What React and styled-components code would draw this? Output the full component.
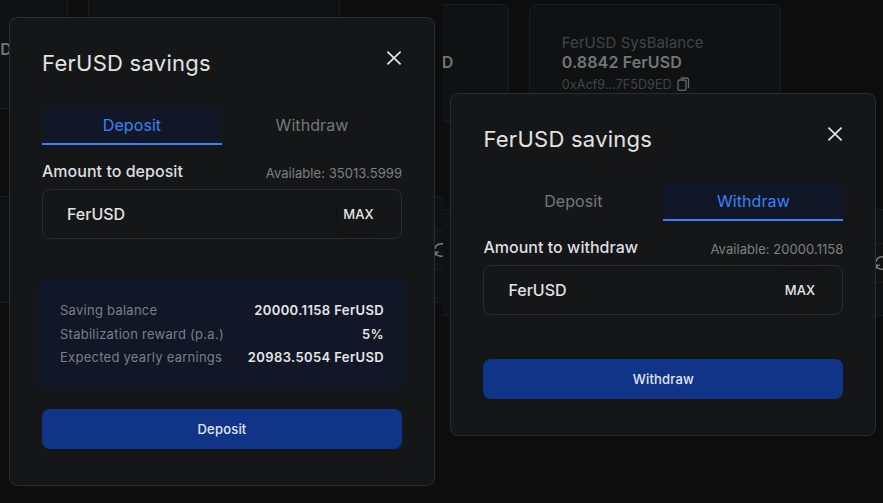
import React from "react";
import styled, { createGlobalStyle } from "styled-components";

const GlobalStyle = createGlobalStyle`
  *, *::before, *::after { box-sizing: border-box; }
  body {
    margin: 0;
    background: #0d0d0e;
    font-family: Inter, "Liberation Sans", sans-serif;
    -webkit-font-smoothing: antialiased;
  }
  button { font: inherit; border: 0; padding: 0; background: none; color: inherit; }
  h2 { margin: 0; }
`;

const Screen = styled.main`
  display: grid;
  grid-template-columns: 443px 440px;
  width: 883px;
  height: 503px;
  overflow: hidden;
`;

const Pane = styled.section`
  display: grid;
  grid-template: 503px / 100%;
  overflow: hidden;
`;

/* Dimmed page behind the dialog */
const Backdrop = styled.div`
  grid-area: 1 / 1;
  width: 700px;
  margin-top: ${(p) => p.$top}px;
  margin-left: ${(p) => p.$left}px;
`;

const Cards = styled.div`
  display: flex;
  gap: 20px;
`;

const Card = styled.article`
  display: flex;
  flex-direction: column;
  width: 252px;
  height: 118px;
  padding: 28px 31.4px 0;
  border: 1px solid #1c1d1e;
  border-radius: 8px;
  background: #101112;
  white-space: nowrap;
`;

const CardLabel = styled.span`
  height: 19px;
  font-size: 15px;
  line-height: 20px;
  letter-spacing: 0.05px;
  color: #434445;
`;

const CardValue = styled.strong`
  height: 20px;
  font-size: 16px;
  font-weight: 600;
  line-height: 20px;
  letter-spacing: 0.13px;
  color: #757677;
  align-self: ${(p) => (p.$end ? "flex-end" : "flex-start")};
  margin-right: ${(p) => (p.$end ? "23.6px" : "0")};
`;

const CardAddress = styled.span`
  display: flex;
  align-items: center;
  gap: 5px;
  height: 24px;
  font-size: 12.6px;
  letter-spacing: 0.03px;
  color: #434445;
  svg { color: #66676a; }
`;

const Table = styled.div`
  display: flex;
  height: 107px;
  margin-top: 87px;
  border: solid #1c1d1e;
  border-width: 1px 0;
  background: #101112;
`;

const RefreshBox = styled.div`
  display: flex;
  align-items: center;
  width: 160px;
  height: 40px;
  margin: 33px 0 0 584px;
  padding-left: 32px;
  border: 1px solid #1c1d1e;
  background: #131213;
  color: #858687;
`;

/* Dialog */
const Dialog = styled.div`
  grid-area: 1 / 1;
  z-index: 1;
  width: 426px;
  height: ${(p) => p.$height}px;
  margin-top: ${(p) => p.$top}px;
  margin-left: ${(p) => p.$left}px;
  padding: 25px 32px 0;
  border: 1px solid #2a2c2d;
  border-radius: 8px;
  background: #151617;
`;

const Header = styled.header`
  display: flex;
  justify-content: space-between;
  height: 64px;
`;

const Title = styled.h2`
  font-size: 22px;
  font-weight: 400;
  line-height: 40px;
  letter-spacing: 0.26px;
  color: #e3e3e4;
`;

const GhostButton = styled.button`
  display: grid;
  place-items: center;
  width: ${(p) => p.$width || 40}px;
  height: 40px;
  border-radius: 8px;
  color: #e6e6e7;
  font-size: 13px;
  font-weight: 500;
  letter-spacing: 0.05px;
  box-shadow: 0 0 4px rgba(5, 6, 7, 0.2);
  background: #151617;
`;

const CloseButton = styled(GhostButton)`
  margin: -5.5px -12px 0 0;
`;

const Tabs = styled.div`
  display: grid;
  grid-template-columns: 1fr 1fr;
  height: 38px;
`;

const Tab = styled.button`
  padding-bottom: 1px;
  font-size: 16px;
  line-height: 34px;
  letter-spacing: 0.08px;
  color: ${(p) => (p.$active ? "#3b82f6" : "#73787d")};
  background: ${(p) => (p.$active ? "#111727" : "transparent")};
  border-bottom: 2px solid ${(p) => (p.$active ? "#3b82f6" : "transparent")};
`;

const FieldHeader = styled.div`
  display: flex;
  justify-content: space-between;
  height: 44px;
  padding-top: 15px;
`;

const FieldLabel = styled.span`
  font-size: 16px;
  font-weight: 500;
  line-height: 22px;
  letter-spacing: 0.03px;
  color: #dedfe0;
`;

const Available = styled.span`
  font-size: 13px;
  line-height: 26px;
  letter-spacing: 0.05px;
  color: #7b8084;
`;

const Field = styled.div`
  display: flex;
  align-items: center;
  justify-content: space-between;
  height: 50px;
  padding: 0 21.5px 0 24px;
  border: 1px solid #2a2c2d;
  border-radius: 8px;
  font-size: 16px;
  font-weight: 500;
  color: #e3e3e4;
`;

const Summary = styled.dl`
  display: flex;
  flex-direction: column;
  height: 110px;
  margin: 40px -4px 0;
  padding: 19px 22px 0;
  border-radius: 8px;
  background: #111727;
`;

const SummaryRow = styled.div`
  display: flex;
  justify-content: space-between;
  height: 23.6px;
  line-height: 24px;
  dt { font-size: 13px; letter-spacing: 0.26px; color: #7a7f85; }
  dd { margin: 0; font-size: 13px; font-weight: 600; letter-spacing: 0.38px; color: #e6e6e8; }
`;

const Submit = styled.button`
  width: 100%;
  height: 40px;
  margin-top: ${(p) => p.$gap}px;
  border-radius: 8px;
  background: #103588;
  color: #e4e7ef;
  font-size: 13px;
  font-weight: 500;
  letter-spacing: 0.2px;
`;

const CloseIcon = () => (
  <svg width="16" height="16" viewBox="0 0 16 16" fill="none" stroke="currentColor" strokeWidth="1.7">
    <path d="M1.4 1.7 14.6 14.3M14.6 1.7 1.4 14.3" />
  </svg>
);

const CopyIcon = () => (
  <svg width="13" height="14" viewBox="0 0 13 14" fill="none" stroke="currentColor" strokeWidth="1.3">
    <rect x="1" y="3" width="8" height="10.4" rx="1.5" />
    <path d="M3.5 1h6.3A1.7 1.7 0 0 1 11.5 2.7v8.6" />
  </svg>
);

const RefreshIcon = () => (
  <svg width="16" height="16" viewBox="0 0 16 16" fill="none" stroke="currentColor" strokeWidth="1.3">
    <path d="M2 7A6 6 0 0 1 13.5 5.5M14 9A6 6 0 0 1 2.5 10.5M14 2v3.8h-3.8M2 14v-3.8h3.8" />
  </svg>
);

const summary = [
  ["Saving balance", "20000.1158 FerUSD"],
  ["Stabilization reward (p.a.)", "5%"],
  ["Expected yearly earnings", "20983.5054 FerUSD"],
];

function Page({ top, left, account }) {
  return (
    <Backdrop $top={top} $left={left}>
      <Cards>
        <Card>
          <CardLabel />
          <CardValue $end>D</CardValue>
        </Card>
        <Card>
          {account && (
            <>
              <CardLabel>{account.label}</CardLabel>
              <CardValue>{account.balance}</CardValue>
              <CardAddress>
                {account.address}
                <CopyIcon />
              </CardAddress>
            </>
          )}
        </Card>
      </Cards>
      <Table>
        <RefreshBox>
          <RefreshIcon />
        </RefreshBox>
      </Table>
    </Backdrop>
  );
}

function SavingsDialog({ action, available, rows, ...place }) {
  return (
    <Dialog role="dialog" $top={place.top} $left={place.left} $height={place.height}>
      <Header>
        <Title>FerUSD savings</Title>
        <CloseButton aria-label="Close">
          <CloseIcon />
        </CloseButton>
      </Header>
      <Tabs>
        {["Deposit", "Withdraw"].map((name) => (
          <Tab key={name} $active={name === action}>{name}</Tab>
        ))}
      </Tabs>
      <FieldHeader>
        <FieldLabel>Amount to {action.toLowerCase()}</FieldLabel>
        <Available>Available: {available}</Available>
      </FieldHeader>
      <Field>
        FerUSD
        <GhostButton $width={42}>MAX</GhostButton>
      </Field>
      {rows && (
        <Summary>
          {rows.map(([label, value]) => (
            <SummaryRow key={label}>
              <dt>{label}</dt>
              <dd>{value}</dd>
            </SummaryRow>
          ))}
        </Summary>
      )}
      <Submit $gap={rows ? 20 : 44}>{action}</Submit>
    </Dialog>
  );
}

const sysBalance = {
  label: "FerUSD SysBalance",
  balance: "0.8842 FerUSD",
  address: "0xAcf9...7F5D9ED",
};

export default function App() {
  return (
    <>
      <GlobalStyle />
      <Screen>
        <Pane>
          <Page top={-9} left={-184} />
          <SavingsDialog action="Deposit" available="35013.5999" rows={summary} top={17} left={9} height={469} />
        </Pane>
        <Pane>
          <Page top={4} left={-185.6} account={sysBalance} />
          <SavingsDialog action="Withdraw" available="20000.1158" top={93} left={7.4} height={343} />
        </Pane>
      </Screen>
    </>
  );
}
